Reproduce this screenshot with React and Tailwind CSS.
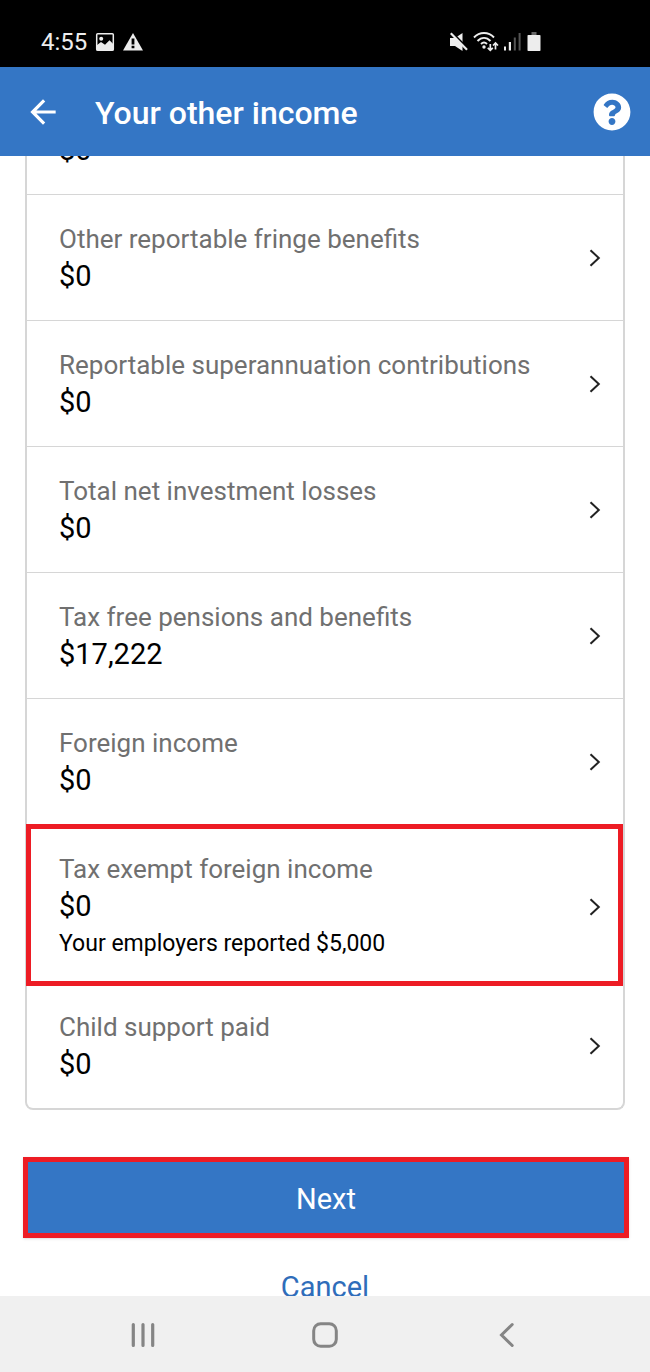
import { FaQuestionCircle } from 'react-icons/fa';
import { MdArrowBack } from 'react-icons/md';

const incomeItems = [
  { value: '$0' },
  { label: 'Other reportable fringe benefits', value: '$0' },
  { label: 'Reportable superannuation contributions', value: '$0' },
  { label: 'Total net investment losses', value: '$0' },
  { label: 'Tax free pensions and benefits', value: '$17,222' },
  { label: 'Foreign income', value: '$0' },
  { label: 'Tax exempt foreign income', value: '$0', note: 'Your employers reported $5,000', highlight: true },
  { label: 'Child support paid', value: '$0' },
];

const StatusBar = () => (
  <div className="flex h-[67px] shrink-0 items-center justify-between bg-black pt-[17px] pr-[109px] pl-[41px] text-[#ededed]">
    <div className="flex items-center gap-2">
      <span className="text-2xl leading-6">4:55</span>
      <svg width="20" height="20" viewBox="0 0 20 20">
        <rect x="1.7" y="1.7" width="16.6" height="16.6" rx="1" fill="none" stroke="currentColor" strokeWidth="1.5" />
        <circle cx="6.2" cy="6.8" r="2" fill="currentColor" />
        <path d="M1.5 13.5l4.5-3.5 4 2.8 4.5-4.6 4 4V18.5H1.5z" fill="currentColor" />
      </svg>
      <svg width="20" height="20" viewBox="0 0 20 20">
        <path d="M10 1L20 18.5H0z" fill="currentColor" />
        <path d="M8.6 6.5h2.8v6H8.6zM8.6 13.8h2.8v2.4H8.6z" fill="#000" />
      </svg>
    </div>

    <div className="flex items-center gap-[5px]">
      {/* sound off */}
      <svg width="18" height="20" viewBox="0 0 18 20">
        <path d="M0 6h5l7.5-5v18L5 14H0z" fill="currentColor" />
        <path d="M0-1.2L19 18" stroke="#000" strokeWidth="2.6" />
        <path d="M.8 1.3L17 17.8" stroke="currentColor" strokeWidth="2.2" />
      </svg>
      {/* wifi with data arrows */}
      <svg width="26" height="22" viewBox="0 0 26 22" fill="none" stroke="currentColor">
        <path d="M1 6.5C6.500.5 15.500.5 21 6.500" strokeWidth="1.9" />
        <path d="M4.500 10C8.500 5.800 13.500 5.800 17.500 10" strokeWidth="1.9" />
        <path d="M8 13C10 11 12 11 14 13" strokeWidth="1.9" />
        <circle cx="11" cy="16" r="1.7" fill="currentColor" stroke="none" />
        <path d="M17.300 13v6M14.800 16.800l2.500 2.500 2.500-2.500M22.500 18.500v-6M20 14.500l2.500-2.500 2.500 2.500" strokeWidth="1.7" />
      </svg>
      <svg width="18" height="20" viewBox="0 0 18 20" fill="currentColor">
        <rect x="0" y="14.5" width="2" height="4" />
        <rect x="4.8" y="10" width="2.2" height="8.5" />
        <rect x="9.8" y="5.5" width="2" height="13" fill="#555" />
        <rect x="14.6" y="1" width="2" height="17.5" fill="#555" />
      </svg>
      <svg width="14" height="20" viewBox="0 0 14 20">
        <rect x="4.5" y="0" width="5" height="3" fill="#666" />
        <rect x=".5" y="3" width="13" height="16" rx=".8" fill="currentColor" />
      </svg>
    </div>
  </div>
);

const IncomeRow = ({ label, value, note, highlight }) => (
  <li className="relative border-b border-[#d6d6d6] last:border-b-0">
    <button
      type="button"
      className={`flex w-full items-center justify-between pt-[26px] pr-[22px] pl-8 text-left ${note ? 'pb-5' : 'pb-[25px]'}`}
    >
      <span className="flex flex-col">
        <span className="min-h-[37px] text-[26px] leading-[37px] text-[#707070]">{label}</span>
        <span className="text-[29px] leading-[37px] text-black">{value}</span>
        {note && <span className="text-[23px] leading-[37px] text-black">{note}</span>}
      </span>
      <svg width="12" height="18" viewBox="0 0 12 18" fill="none" stroke="#222" strokeWidth="2">
        <path d="M1.500 1.200L9.800 9l-8.300 7.800" />
      </svg>
    </button>
    {highlight && (
      <span className="pointer-events-none absolute -top-px right-0 -bottom-1 -left-px border-5 border-[#ed1c24]" />
    )}
  </li>
);

const NavBar = () => (
  <nav className="grid h-[76px] shrink-0 grid-cols-3 bg-[#f0f0f0] px-[52px] pt-0.5 text-[#858585]">
    <button type="button" aria-label="Recent apps" className="flex items-center justify-center">
      <svg width="24" height="26" viewBox="0 0 24 26" stroke="currentColor" strokeWidth="3.2" strokeLinecap="round">
        <path d="M2.300 2.600v20.800M12 2.600v20.800M21.700 2.600v20.800" />
      </svg>
    </button>
    <button type="button" aria-label="Home" className="flex items-center justify-center">
      <svg width="26" height="26" viewBox="0 0 26 26" fill="none" stroke="currentColor" strokeWidth="3">
        <rect x="1.7" y="1.7" width="22.6" height="22.6" rx="7" />
      </svg>
    </button>
    <button type="button" aria-label="Back" className="flex items-center justify-center">
      <svg width="16" height="26" viewBox="0 0 16 26" fill="none" stroke="currentColor" strokeWidth="3" strokeLinecap="round">
        <path d="M13.200 2.500L2.500 13l10.700 10.500" />
      </svg>
    </button>
  </nav>
);

const App = () => {
  return (
    <div className="flex h-screen flex-col overflow-hidden bg-white font-[Roboto,sans-serif]">
      <StatusBar />

      {/* Header */}
      <header className="relative z-10 flex h-[89px] shrink-0 items-center bg-[#3476c5] pr-[19px] pl-6 text-white">
        <button type="button" aria-label="Back">
          <MdArrowBack size={38} />
        </button>
        <h1 className="ml-[33px] flex-1 pt-0.5 text-[32px] leading-10 font-medium">Your other income</h1>
        <button type="button" aria-label="Help">
          <FaQuestionCircle size={38} />
        </button>
      </header>

      {/* Income list, scrolled part way down */}
      <main className="min-h-0 flex-1 overflow-hidden">
        <ul className="-mt-[87px] mx-[25px] rounded-b-lg border-2 border-t-0 border-[#d6d6d6]">
          {incomeItems.map((item, i) => (
            <IncomeRow key={i} {...item} />
          ))}
        </ul>

        <div className="mt-[47px] mr-[21px] ml-[23px]">
          <button type="button" className="h-[81px] w-full border-5 border-[#ed1c24] bg-[#3476c5] pt-1 text-[29px] text-white shadow-sm">
            Next
          </button>
        </div>
        <div className="mt-[31px] text-center">
          <button type="button" className="text-[29px] leading-[37px] text-[#2f6dba]">Cancel</button>
        </div>
      </main>

      <NavBar />
    </div>
  );
};

export default App;
